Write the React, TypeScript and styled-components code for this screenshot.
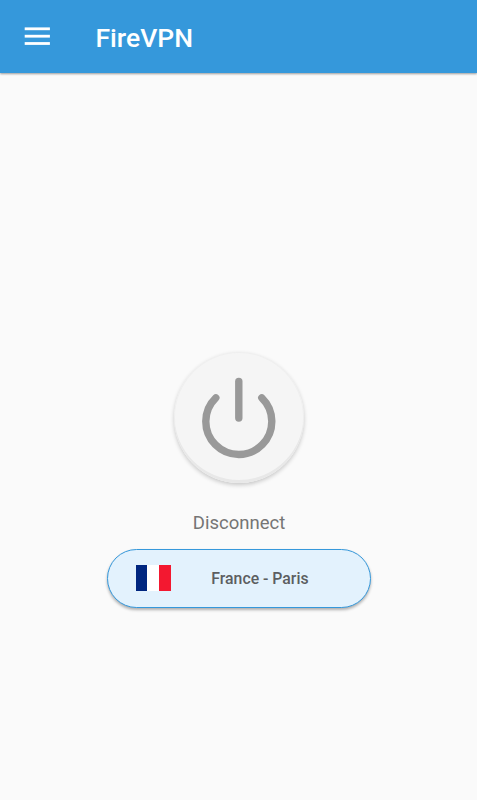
import React from "react";
import styled, { createGlobalStyle } from "styled-components";

const GlobalStyle = createGlobalStyle`
  * { box-sizing: border-box; }
  body { margin: 0; background: #fafafa; font-family: Roboto, "Liberation Sans", sans-serif; }
  button { font: inherit; padding: 0; border: 0; cursor: pointer; }
`;

const Screen = styled.div`
  display: flex;
  flex-direction: column;
  height: 800px;
  overflow: hidden;
`;

const AppBar = styled.header`
  display: flex;
  align-items: center;
  flex: 0 0 73px;
  padding-left: 24px;
  background: #3598db;
  box-shadow: 0 1px 2px rgba(0, 0, 0, 0.38);
`;

const MenuButton = styled.button`
  display: flex;
  margin-right: 44.5px;
  background: none;
`;

const Title = styled.h1`
  margin: 3px 0 0;
  color: #fff;
  font-size: 26.5px;
  font-weight: 500;
  line-height: 32px;
`;

const Main = styled.main`
  display: flex;
  flex-direction: column;
  align-items: center;
  padding-top: 279px;
`;

const PowerButton = styled.button`
  display: flex;
  width: 130px;
  height: 131px;
  margin-left: 1px;
  border-radius: 50%;
  background: #f5f5f5;
  box-shadow:
    inset 0 -3px 0 #e8e8e8,
    inset 0 0 0 1px #efefef,
    0 2px 4px rgba(0, 0, 0, 0.2);
`;

const Status = styled.p`
  margin: 27px 0 0;
  padding-left: 1px;
  color: #757575;
  font-size: 18.5px;
  line-height: 26px;
`;

const ServerButton = styled.button`
  display: flex;
  align-items: center;
  width: 264px;
  height: 58.5px;
  margin-top: 13px;
  && {
    padding-left: 28px;
    border: 1.5px solid #3598db;
  }
  border-radius: 30px;
  background: #e3f2fd;
  box-shadow: 0 2px 3px rgba(0, 0, 0, 0.3);
`;

const Flag = styled.span`
  display: flex;
  width: 35px;
  height: 26px;
  margin-bottom: 1px;
`;

const Stripe = styled.span<{ $color: string }>`
  flex: 1;
  background: ${(p) => p.$color};
`;

const ServerName = styled.span`
  margin: 1px 0 0 40.8px;
  color: #5c5e60;
  font-size: 15.8px;
  font-weight: 500;
`;

const FRANCE = ["#00267f", "#ffffff", "#f31830"];

export default function App() {
  return (
    <>
      <GlobalStyle />
      <Screen>
        <AppBar>
          <MenuButton aria-label="Menu">
            <svg width="27" height="20" viewBox="0 0 27 20" fill="#fff">
              <rect x="0.7" y="0.4" width="25.2" height="2.8" />
              <rect x="0.7" y="7.8" width="25.2" height="2.8" />
              <rect x="0.7" y="15.1" width="25.2" height="2.8" />
            </svg>
          </MenuButton>
          <Title>FireVPN</Title>
        </AppBar>
        <Main>
          <PowerButton aria-label="Disconnect">
            <svg
              width="130"
              height="131"
              viewBox="0 0 130 131"
              fill="none"
              stroke="#999"
              strokeWidth="7.4"
              strokeLinecap="round"
            >
              <path d="M64.8 29.5V66" />
              <path d="M41.8 45.8A33 33 0 1 0 87.8 45.8" />
            </svg>
          </PowerButton>
          <Status>Disconnect</Status>
          <ServerButton>
            <Flag>
              {FRANCE.map((color) => (
                <Stripe key={color} $color={color} />
              ))}
            </Flag>
            <ServerName>France - Paris</ServerName>
          </ServerButton>
        </Main>
      </Screen>
    </>
  );
}
